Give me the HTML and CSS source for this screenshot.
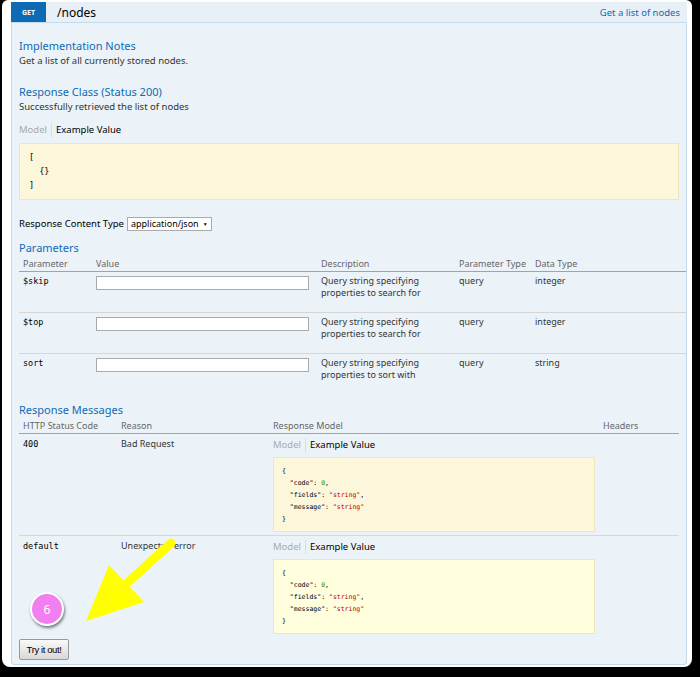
FILE: index.html
```html
<!DOCTYPE html>
<html>
<head>
<meta charset="utf-8">
<link rel="stylesheet" href="styles.css">
</head>
<body>
<div class="frame">
  <div class="op">
    <div class="heading">
      <span class="method">GET</span>
      <span class="path">/nodes</span>
      <span class="summary">Get a list of nodes</span>
    </div>
    <div class="content">
      <h4 class="h-first">Implementation Notes</h4>
      <p class="note">Get a list of all currently stored nodes.</p>
      <h4 class="h-next">Response Class (Status 200)</h4>
      <p class="note">Successfully retrieved the list of nodes</p>
      <div class="tabs main-tabs"><span class="tab off">Model</span><span class="tab on">Example Value</span></div>
      <pre class="sample big">[
  {}
]</pre>
      <div class="ctype">Response Content Type <span class="select">application/json <span class="caret">▼</span></span></div>
      <h4 class="h-params">Parameters</h4>
      <table class="params">
        <colgroup><col class="c1"><col class="c2"><col class="c3"><col class="c4"><col></colgroup>
        <thead><tr><th>Parameter</th><th>Value</th><th>Description</th><th>Parameter Type</th><th>Data Type</th></tr></thead>
        <tbody>
          <tr><td class="code">$skip</td><td><span class="input"></span></td><td>Query string specifying<br>properties to search for</td><td>query</td><td>integer</td></tr>
          <tr><td class="code">$top</td><td><span class="input"></span></td><td>Query string specifying<br>properties to search for</td><td>query</td><td>integer</td></tr>
          <tr><td class="code">sort</td><td><span class="input"></span></td><td>Query string specifying<br>properties to sort with</td><td>query</td><td>string</td></tr>
        </tbody>
      </table>
      <h4 class="h-msgs">Response Messages</h4>
      <table class="msgs">
        <colgroup><col class="m1"><col class="m2"><col class="m3"><col></colgroup>
        <thead><tr><th>HTTP Status Code</th><th>Reason</th><th>Response Model</th><th>Headers</th></tr></thead>
        <tbody>
          <tr class="r1">
            <td class="code">400</td><td>Bad Request</td>
            <td>
              <div class="tabs"><span class="tab off">Model</span><span class="tab on">Example Value</span></div>
              <pre class="sample small">{
  "code": <span class="num">0</span>,
  "fields": <span class="str">"string"</span>,
  "message": <span class="str">"string"</span>
}</pre>
            </td>
            <td></td>
          </tr>
          <tr class="r2">
            <td class="code">default</td><td>Unexpected error</td>
            <td>
              <div class="tabs"><span class="tab off">Model</span><span class="tab on">Example Value</span></div>
              <pre class="sample small light">{
  "code": <span class="num">0</span>,
  "fields": <span class="str">"string"</span>,
  "message": <span class="str">"string"</span>
}</pre>
            </td>
            <td></td>
          </tr>
        </tbody>
      </table>
      <button class="try">Try it out!</button>
    </div>
  </div>
  <svg class="arrow" width="700" height="677" viewBox="0 0 700 677">
    <line x1="171" y1="543" x2="124" y2="586" stroke="#ffff00" stroke-width="9" stroke-linecap="round"/>
    <polygon points="109,565 144,602 86,621" fill="#ffff00"/>
  </svg>
  <div class="badge">6</div>
</div>
</body>
</html>
```
FILE: styles.css
```css
html, body {
  margin: 0;
  padding: 0;
  background: #000;
}
body {
  width: 700px;
  height: 677px;
  overflow: hidden;
  font-family: "Noto Sans", "Open Sans", sans-serif;
  color: #333;
}
.frame {
  position: relative;
  margin-left: 2px;
  width: 690px;
  height: 667px;
  box-sizing: border-box;
  background: #fff;
  border-radius: 6px 6px 8px 8px;
  padding: 2px 5px 2px 9px;
}
.op {
  height: 663px;
  box-sizing: border-box;
  background: #ebf3f9;
  border: 1px solid #c3d9ec;
  border-top: none;
  border-radius: 0 0 4px 4px;
}
.heading {
  display: flex;
  align-items: center;
  height: 20px;
  background: #e7f0f7;
  border-bottom: 1px solid #c3d9ec;
  margin: 0 -1px 0 -1px;
}
.method {
  width: 35px;
  height: 20px;
  background: #0f6ab4;
  color: #fff;
  font-size: 7px;
  font-weight: bold;
  display: flex;
  align-items: center;
  justify-content: center;
}
.path {
  margin-left: 11px;
  font-size: 12px;
  color: #000;
  flex: 1;
}
.summary {
  font-size: 9.5px;
  color: #0f6ab4;
  margin-right: 7px;
}
.content {
  padding: 0 7px 0 7px;
}
h4 {
  margin: 0;
  font-weight: normal;
  font-size: 11px;
  line-height: 16px;
  color: #0f6ab4;
}
.h-first { padding-top: 15px; }
.h-next { margin-top: 16px; }
.h-params { margin-top: 8px; }
.h-msgs { margin-top: 7px; }
.note {
  margin: 0;
  font-size: 9.5px;
  line-height: 14px;
}
.tabs {
  display: flex;
  align-items: center;
  font-size: 9.5px;
  line-height: 14px;
}
.main-tabs { margin-top: 9px; }
.tab { padding: 0 3px 0 0; }
.tab.off { color: #aaa; border-right: 1px solid #ddd; padding-right: 4px; margin-right: 4px; }
.tab.on { color: #000; }
.sample {
  margin: 0;
  background: #fcf6db;
  border: 1px solid #efe6bd;
  font-family: "DejaVu Sans Mono", monospace;
  color: #000;
}
.sample.big {
  margin-top: 6px;
  height: 57px;
  box-sizing: border-box;
  padding: 6px 9px;
  font-size: 8.5px;
  line-height: 14px;
}
.ctype {
  margin-top: 16px;
  font-size: 9.5px;
  line-height: 16px;
  color: #000;
  display: flex;
  align-items: center;
  gap: 3px;
}
.select {
  display: inline-flex;
  align-items: center;
  height: 14px;
  box-sizing: border-box;
  border: 1px solid #aaa;
  background: #fff;
  padding: 0 3px;
  font-size: 9px;
}
.caret { font-size: 5px; margin-left: 4px; }
table {
  border-collapse: collapse;
  table-layout: fixed;
  font-size: 9px;
}
.params { width: calc(100% + 7px); margin-top: 0; }
.c1 { width: 73px; }
.c2 { width: 225px; }
.c3 { width: 138px; }
.c4 { width: 76px; }
th {
  text-align: left;
  font-weight: normal;
  color: #666;
  padding: 0 4px;
  height: 15px;
  border-bottom: 1px solid #a3a3a3;
  font-size: 9px;
}
td {
  vertical-align: top;
  padding: 3px 4px 0 4px;
  line-height: 12px;
  color: #333;
}
.params tbody tr { height: 41px; }
.params tbody tr + tr td { border-top: 1px solid #d6d6d6; }
.code {
  font-family: "DejaVu Sans Mono", monospace;
  font-size: 8.5px;
  color: #000;
}
.input {
  display: block;
  width: 213px;
  height: 14px;
  box-sizing: border-box;
  border: 1px solid #aaa;
  background: #fff;
  margin-top: 1px;
}
.msgs { width: 100%; }
.m1 { width: 98px; }
.m2 { width: 152px; }
.m3 { width: 330px; }
.msgs tbody td { padding-top: 4px; }
.msgs .r1 td { height: 97px; }
.msgs .r2 td { border-top: 1px solid #d6d6d6; height: 99px; }
.sample.small {
  margin-top: 5px;
  height: 75px;
  box-sizing: border-box;
  padding: 7px 8px;
  font-size: 6.5px;
  line-height: 12px;
}
.sample.light { background: #fffedd; }
.num { color: #1a9a1a; }
.str { color: #b00; }
.try {
  display: block;
  margin-top: 0;
  width: 50px;
  height: 21px;
  padding: 0;
  border: 1px solid #999;
  border-radius: 2px;
  background: linear-gradient(#fafafa, #d8d8d8);
  font-family: "Liberation Sans", Arial, sans-serif;
  font-size: 9.5px;
  letter-spacing: -0.4px;
  color: #000;
}
.arrow {
  position: absolute;
  left: -2px;
  top: 0;
  pointer-events: none;
}
.badge {
  position: absolute;
  left: 28px;
  top: 592px;
  width: 30px;
  height: 30px;
  border-radius: 50%;
  background: #f27ff0;
  border: 2px solid #fff;
  box-shadow: 1px 2px 3px rgba(0,0,0,0.5);
  color: #fff;
  font-size: 12px;
  display: flex;
  align-items: center;
  justify-content: center;
}
```
